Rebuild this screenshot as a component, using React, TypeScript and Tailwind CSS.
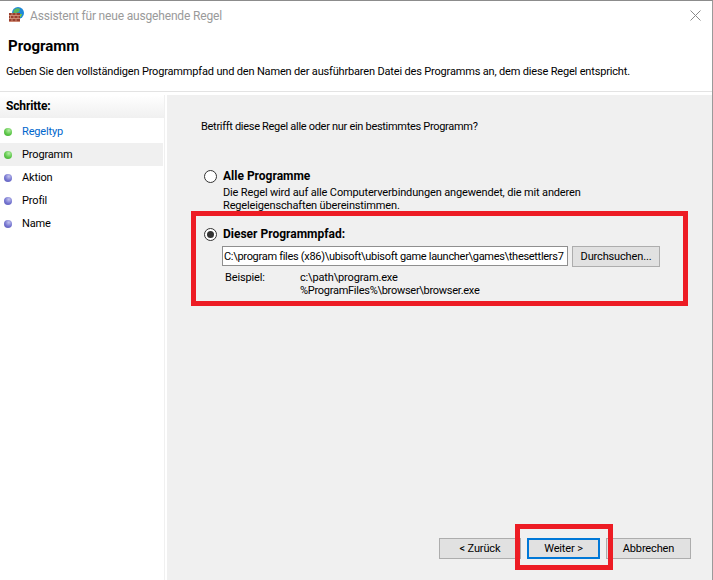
import React from "react";

function Bullet({ green }: { green?: boolean }) {
  return (
    <span
      className={
        green
          ? "w-2 h-2 rounded-full shrink-0 bg-[radial-gradient(circle_at_60%_30%,#b5eda5,#5cc748_55%,#3fa52f)]"
          : "w-2 h-2 rounded-full shrink-0 bg-[radial-gradient(circle_at_60%_30%,#c3c3ee,#7373cf_55%,#5a5ab5)]"
      }
    />
  );
}

function Step({ label, green, active, link }: { label: string; green?: boolean; active?: boolean; link?: boolean }) {
  return (
    <div className={`h-[23px] flex items-center pl-1 gap-[10px] mr-[1px] ${active ? "bg-[#f0f0f0]" : ""}`}>
      <Bullet green={green} />
      <span className={link ? "text-[#0066cc]" : "text-black"}>{label}</span>
    </div>
  );
}

function Radio({ checked }: { checked?: boolean }) {
  return (
    <span className="w-[13px] h-[13px] rounded-full border border-[#333] bg-white flex items-center justify-center shrink-0">
      {checked && <span className="w-[7px] h-[7px] rounded-full bg-[#333]" />}
    </span>
  );
}

function Btn({ children, className = "" }: { children: React.ReactNode; className?: string }) {
  return (
    <div className={`h-[21px] bg-[#e1e1e1] flex items-center justify-center text-black ${className}`}>{children}</div>
  );
}

function Logo() {
  return (
    <svg width="24" height="24" viewBox="0 0 24 24" className="shrink-0">
      <circle cx="18" cy="9" r="6" fill="#1e88d8" />
      <path d="M14 6c2-2 5-2 6-1l-1 3-3 1 1 3-3 1-1-3z" fill="#5cb85c" />
      <path d="M20 10l2 0-1 3-2 0z" fill="#7ac943" />
      <rect x="9" y="9" width="11" height="9" fill="#983f2e" />
      <path d="M9 11.500h11M9 14.500h11M9 17.500h11M12 9v2.500M16 9v2.500M10.500 11.500v3M14 11.500v3M18 11.500v3M12 14.500v3M16 14.500v3" stroke="#d99b84" strokeWidth="0.800" fill="none" />
    </svg>
  );
}

export default function App() {
  return (
    <div
      className="relative w-[713px] h-[580px] overflow-hidden bg-white border-t border-t-[#8c8c8c] border-r border-r-[#9a9a9a] text-[11px] tracking-[-0.15px] leading-[13px] text-black flex flex-col"
      style={{ fontFamily: 'Roboto, "Liberation Sans", sans-serif' }}
    >
      <div className="h-[30px] flex items-center shrink-0">
        <Logo />
        <span className="ml-[6px] text-[#9a9a9a] text-[12px] tracking-[-0.17px]">Assistent für neue ausgehende Regel</span>
        <svg width="11" height="11" viewBox="0 0 11 11" className="ml-auto mr-[11px] -mt-[1px]">
          <path d="M0.500 0.500l10 10M10.500 0.500l-10 10" stroke="#8a8a8a" fill="none" />
        </svg>
      </div>
      <div className="h-[61px] shrink-0 border-b border-b-[#e3e3e3] pb-1">
        <div className="pl-2 mt-[8px] font-bold text-[15px] tracking-normal leading-[14px]">Programm</div>
        <div className="pl-[6px] mt-[12px] tracking-[-0.17px]">
          Geben Sie den vollständigen Programmpfad und den Namen der ausführbaren Datei des Programms an, dem diese Regel entspricht.
        </div>
      </div>
      <div className="flex-1 flex mt-[3px] min-h-0">
        <div className="w-[165px] shrink-0 border-r border-r-[#f0f0f0] mr-[2px]">
          <div className="h-[23px] pl-[6px] flex items-center font-bold text-[12px] bg-[linear-gradient(#ffffff,#f0f0f0)]">Schritte:</div>
          <div className="mt-[2px]">
            <Step label="Regeltyp" green link />
            <Step label="Programm" green active />
            <Step label="Aktion" />
            <Step label="Profil" />
            <Step label="Name" />
          </div>
        </div>
        <div className="flex-1 bg-[#f0f0f0] flex flex-col pl-[34px] pr-[21px]">
          <div className="mt-[25px] tracking-[-0.3px]">Betrifft diese Regel alle oder nur ein bestimmtes Programm?</div>
          <div className="mt-[37px] flex items-center gap-[6px] pl-[3px]">
            <Radio />
            <span className="font-bold text-[12px] tracking-normal">Alle Programme</span>
          </div>
          <div className="ml-[22px] mt-[3px]">
            Die Regel wird auf alle Computerverbindungen angewendet, die mit anderen
            <br />
            Regeleigenschaften übereinstimmen.
          </div>
          <div className="mt-[16px] flex items-center gap-[6px] pl-[3px]">
            <Radio checked />
            <span className="font-bold text-[12px] tracking-normal">Dieser Programmpfad:</span>
          </div>
          <div className="ml-[21px] mt-[5px] flex items-start gap-1">
            <div className="w-[346px] h-5 border border-[#8f8f8f] bg-white flex items-center pl-[1px] tracking-[-0.3px] overflow-hidden whitespace-nowrap">
              C:\program files (x86)\ubisoft\ubisoft game launcher\games\thesettlers7
            </div>
            <Btn className="w-[88px] border border-[#adadad]">Durchsuchen...</Btn>
          </div>
          <div className="ml-[24px] mt-[4px] flex">
            <div className="w-[75px]">Beispiel:</div>
            <div>
              c:\path\program.exe
              <br />
              <span className="tracking-[-0.27px]">%ProgramFiles%\browser\browser.exe</span>
            </div>
          </div>
          <div className="mt-auto mb-[21px] flex gap-[6px] justify-end">
            <Btn className="w-[82px] border border-[#adadad]">&lt; Zurück</Btn>
            <Btn className="w-[73px] border-2 border-[#0078d7]">Weiter &gt;</Btn>
            <Btn className="w-[85px] border border-[#adadad]">Abbrechen</Btn>
          </div>
        </div>
      </div>
      <div className="absolute left-[191px] top-[210px] w-[497px] h-[95px] border-[5px] border-[#ed1c24]" />
      <div className="absolute left-[515px] top-[523px] w-[98px] h-[46px] border-[5px] border-[#ed1c24]" />
    </div>
  );
}
